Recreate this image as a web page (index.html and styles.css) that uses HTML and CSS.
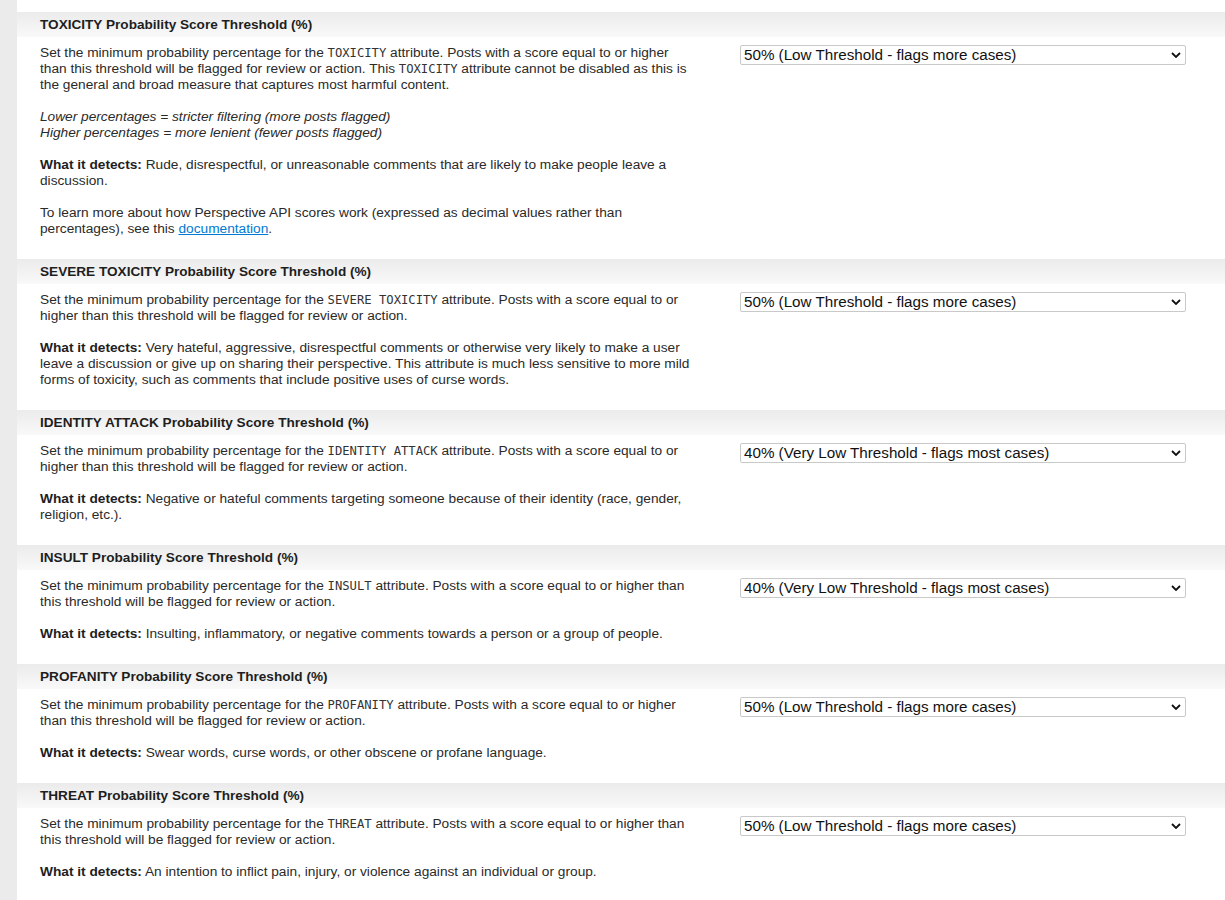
FILE: index.html
```html
<!DOCTYPE html>
<html lang="en">
  <head>
    <meta charset="UTF-8" />
    <meta name="viewport" content="width=device-width, initial-scale=1.0" />
    <title>Perspective Thresholds</title>
    <link rel="stylesheet" href="styles.css">
  </head>
  <body>
    <div class="rail"></div>
    <div class="settings">
      <section class="setting">
        <h3 class="setting-title">TOXICITY Probability Score Threshold (%)</h3>
        <div class="setting-body">
          <div class="setting-desc">
            <p>Set the minimum probability percentage for the <code>TOXICITY</code> attribute. Posts with a score equal to or higher than this threshold will be flagged for review or action. This <code>TOXICITY</code> attribute cannot be disabled as this is the general and broad measure that captures most harmful content.</p>
            <p><em>Lower percentages = stricter filtering (more posts flagged)<br>Higher percentages = more lenient (fewer posts flagged)</em></p>
            <p><strong>What it detects:</strong> Rude, disrespectful, or unreasonable comments that are likely to make people leave a discussion.</p>
            <p>To learn more about how Perspective API scores work (expressed as decimal values rather than percentages), see this <a href="#">documentation</a>.</p>
          </div>
          <div class="select-wrap">
            <select>
              <option>50% (Low Threshold - flags more cases)</option>
            </select>
            <svg class="chevron" width="10" height="6" viewBox="0 0 10 6"><path d="M1 1l4 4 4-4" fill="none" stroke="#111" stroke-width="1.8"/></svg>
          </div>
        </div>
      </section>

      <section class="setting">
        <h3 class="setting-title">SEVERE TOXICITY Probability Score Threshold (%)</h3>
        <div class="setting-body">
          <div class="setting-desc">
            <p>Set the minimum probability percentage for the <code>SEVERE TOXICITY</code> attribute. Posts with a score equal to or higher than this threshold will be flagged for review or action.</p>
            <p><strong>What it detects:</strong> Very hateful, aggressive, disrespectful comments or otherwise very likely to make a user leave a discussion or give up on sharing their perspective. This attribute is much less sensitive to more mild forms of toxicity, such as comments that include positive uses of curse words.</p>
          </div>
          <div class="select-wrap">
            <select>
              <option>50% (Low Threshold - flags more cases)</option>
            </select>
            <svg class="chevron" width="10" height="6" viewBox="0 0 10 6"><path d="M1 1l4 4 4-4" fill="none" stroke="#111" stroke-width="1.8"/></svg>
          </div>
        </div>
      </section>

      <section class="setting">
        <h3 class="setting-title">IDENTITY ATTACK Probability Score Threshold (%)</h3>
        <div class="setting-body">
          <div class="setting-desc">
            <p>Set the minimum probability percentage for the <code>IDENTITY ATTACK</code> attribute. Posts with a score equal to or higher than this threshold will be flagged for review or action.</p>
            <p><strong>What it detects:</strong> Negative or hateful comments targeting someone because of their identity (race, gender, religion, etc.).</p>
          </div>
          <div class="select-wrap">
            <select>
              <option>40% (Very Low Threshold - flags most cases)</option>
            </select>
            <svg class="chevron" width="10" height="6" viewBox="0 0 10 6"><path d="M1 1l4 4 4-4" fill="none" stroke="#111" stroke-width="1.8"/></svg>
          </div>
        </div>
      </section>

      <section class="setting">
        <h3 class="setting-title">INSULT Probability Score Threshold (%)</h3>
        <div class="setting-body">
          <div class="setting-desc">
            <p>Set the minimum probability percentage for the <code>INSULT</code> attribute. Posts with a score equal to or higher than this threshold will be flagged for review or action.</p>
            <p><strong>What it detects:</strong> Insulting, inflammatory, or negative comments towards a person or a group of people.</p>
          </div>
          <div class="select-wrap">
            <select>
              <option>40% (Very Low Threshold - flags most cases)</option>
            </select>
            <svg class="chevron" width="10" height="6" viewBox="0 0 10 6"><path d="M1 1l4 4 4-4" fill="none" stroke="#111" stroke-width="1.8"/></svg>
          </div>
        </div>
      </section>

      <section class="setting">
        <h3 class="setting-title">PROFANITY Probability Score Threshold (%)</h3>
        <div class="setting-body">
          <div class="setting-desc">
            <p>Set the minimum probability percentage for the <code>PROFANITY</code> attribute. Posts with a score equal to or higher than this threshold will be flagged for review or action.</p>
            <p><strong>What it detects:</strong> Swear words, curse words, or other obscene or profane language.</p>
          </div>
          <div class="select-wrap">
            <select>
              <option>50% (Low Threshold - flags more cases)</option>
            </select>
            <svg class="chevron" width="10" height="6" viewBox="0 0 10 6"><path d="M1 1l4 4 4-4" fill="none" stroke="#111" stroke-width="1.8"/></svg>
          </div>
        </div>
      </section>

      <section class="setting">
        <h3 class="setting-title">THREAT Probability Score Threshold (%)</h3>
        <div class="setting-body">
          <div class="setting-desc">
            <p>Set the minimum probability percentage for the <code>THREAT</code> attribute. Posts with a score equal to or higher than this threshold will be flagged for review or action.</p>
            <p><strong>What it detects:</strong> An intention to inflict pain, injury, or violence against an individual or group.</p>
          </div>
          <div class="select-wrap">
            <select>
              <option>50% (Low Threshold - flags more cases)</option>
            </select>
            <svg class="chevron" width="10" height="6" viewBox="0 0 10 6"><path d="M1 1l4 4 4-4" fill="none" stroke="#111" stroke-width="1.8"/></svg>
          </div>
        </div>
      </section>
    </div>
  </body>
</html>
```

FILE: styles.css
```css
body {
  margin: 0;
  display: flex;
  min-height: 100vh;
  background: #fff;
  font-family: "Liberation Sans", Arial, sans-serif;
  font-size: 13.7px;
  line-height: 16px;
  color: #2a2a2a;
}
.rail {
  width: 17px;
  flex: none;
  background: #ebebeb;
}
.settings {
  flex: 1;
  padding-top: 12px;
}
.setting-title {
  margin: 0;
  height: 25px;
  line-height: 25px;
  padding: 0 23px;
  font-size: 13.6px;
  font-weight: bold;
  color: #1e1e1e;
  background: linear-gradient(to bottom, #ebebeb, #f9f9f9);
}
.setting-body {
  display: grid;
  grid-template-columns: 654px 446px;
  column-gap: 46px;
  align-items: start;
  padding: 8px 23px 22px;
}
.setting-desc p {
  margin: 0 0 16px;
}
.setting-desc p:last-child {
  margin-bottom: 0;
}
code {
  font-family: "DejaVu Sans Mono", "Liberation Mono", monospace;
  font-size: 12.2px;
  color: #333;
}
strong {
  color: #1e1e1e;
}
a {
  color: #0079d3;
  text-decoration: underline;
}
.select-wrap {
  position: relative;
  height: 20px;
}
select {
  appearance: none;
  -webkit-appearance: none;
  width: 100%;
  height: 20px;
  margin: 0;
  padding: 0 20px 0 3px;
  border: 1px solid #c9c9c9;
  border-radius: 2px;
  background: #fff;
  font-family: "Liberation Sans", Arial, sans-serif;
  font-size: 15.2px;
  line-height: 18px;
  color: #111;
}
.chevron {
  position: absolute;
  right: 5px;
  top: 7px;
  pointer-events: none;
}
```
